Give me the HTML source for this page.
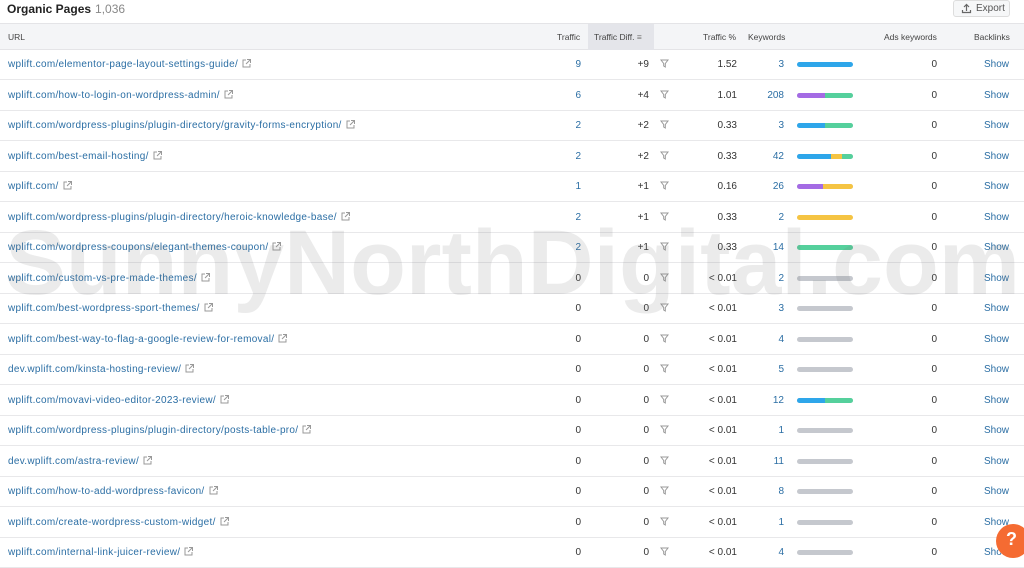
<!DOCTYPE html>
<html><head><meta charset="utf-8"><style>
*{margin:0;padding:0;box-sizing:border-box}
body{width:1024px;height:566px;overflow:hidden;background:#fff;font-family:"Liberation Sans",Arial,sans-serif;font-size:10px;color:#333;position:relative}
.t{position:absolute;left:7px;top:2px;font-size:12px;font-weight:bold;color:#222}
.t span{font-weight:normal;color:#888;margin-left:4px}
.exp{position:absolute;left:953px;top:0;width:57px;height:17px;border:1px solid #ddd;border-radius:3px;background:#f6f7f8;color:#555;font-size:10px;line-height:15px;padding-left:22px}
.exp svg{position:absolute;left:7px;top:2px}
.hd{position:absolute;left:0;top:23px;width:1024px;height:27px;background:#f4f5f7;border-top:1px solid #e4e4e7;border-bottom:1px solid #e4e4e7;font-size:8.5px;color:#444}
.hd div{position:absolute;top:8px}
.hd .sel{position:absolute;left:588px;top:0;width:66px;height:26px;background:#e4e5ea}
.r{position:absolute;left:0;width:1024px;height:31px;border-bottom:1px solid #e8e8ea}
.r div{position:absolute;top:10px}
.u{left:8px;color:#2b6ea4;letter-spacing:.3px}
.u svg{margin-left:4px;vertical-align:-1px}
.tr{right:443px;color:#2b6ea4}
.td{right:375px}
.f{left:660px;top:10px!important;width:9px;height:9px;background:none}
.tp{right:287px}
.kw{right:240px;color:#2b6ea4}
.b{left:797px;top:13px!important;width:56px;height:5px;border-radius:3px;overflow:hidden;display:flex;background:#c5c8ce}
.b i{display:block;height:5px}
.ad{right:87px}
.sh{right:15px;color:#2b6ea4}
.B{background:#2ea6ea}.P{background:#a46be4}.G{background:#55d09c}.Y{background:#f5c443}
.q{position:absolute;left:996px;top:524px;width:34px;height:34px;border-radius:50%;background:#f56b32;color:#fff;font-size:18px;font-weight:bold;padding:5px 0 0 10px}
svg.wm{position:absolute;left:0;top:0}
.f::before{content:"";position:absolute;left:0;top:0;width:9px;height:9px;background:no-repeat}
</style></head><body>
<div class="t">Organic Pages<span>1,036</span></div>
<div class="exp"><svg width="11" height="11" viewBox="0 0 11 11" fill="none" stroke="#666" stroke-width="1.2"><path d="M5.5 8V1.5M3 4l2.5-2.5L8 4M1.5 7v2.5h8V7"/></svg>Export</div>
<div class="hd"><div class="sel"></div>
<div style="left:8px">URL</div><div style="left:557px">Traffic</div><div style="left:594px">Traffic Diff. <span style="color:#777">&#8801;</span></div>
<div style="left:703px">Traffic %</div><div style="left:748px">Keywords</div><div style="left:884px">Ads keywords</div><div style="left:974px">Backlinks</div></div>

<div class="r" style="top:49px"><div class="u">wplift.com/elementor-page-layout-settings-guide/<svg width="9" height="9" viewBox="0 0 9 9" fill="none" stroke="#999"><path d="M4 1H1v7h7V5M5 .5h3.5V4M8.5.5 4 5"/></svg></div><div class="tr">9</div><div class="td">+9</div><div class="f"><svg width="9" height="9" viewBox="0 0 9 9" fill="none" stroke="#999"><path d="M1 1h7L5.3 4.5V8L3.7 7V4.5z"/></svg></div><div class="tp">1.52</div><div class="kw">3</div><div class="b"><i class="B" style="width:100%"></i></div><div class="ad">0</div><div class="sh">Show</div></div>
<div class="r" style="top:80px"><div class="u">wplift.com/how-to-login-on-wordpress-admin/<svg width="9" height="9" viewBox="0 0 9 9" fill="none" stroke="#999"><path d="M4 1H1v7h7V5M5 .5h3.5V4M8.5.5 4 5"/></svg></div><div class="tr">6</div><div class="td">+4</div><div class="f"><svg width="9" height="9" viewBox="0 0 9 9" fill="none" stroke="#999"><path d="M1 1h7L5.3 4.5V8L3.7 7V4.5z"/></svg></div><div class="tp">1.01</div><div class="kw">208</div><div class="b"><i class="P" style="width:50%"></i><i class="G" style="width:50%"></i></div><div class="ad">0</div><div class="sh">Show</div></div>
<div class="r" style="top:110px"><div class="u">wplift.com/wordpress-plugins/plugin-directory/gravity-forms-encryption/<svg width="9" height="9" viewBox="0 0 9 9" fill="none" stroke="#999"><path d="M4 1H1v7h7V5M5 .5h3.5V4M8.5.5 4 5"/></svg></div><div class="tr">2</div><div class="td">+2</div><div class="f"><svg width="9" height="9" viewBox="0 0 9 9" fill="none" stroke="#999"><path d="M1 1h7L5.3 4.5V8L3.7 7V4.5z"/></svg></div><div class="tp">0.33</div><div class="kw">3</div><div class="b"><i class="B" style="width:50%"></i><i class="G" style="width:50%"></i></div><div class="ad">0</div><div class="sh">Show</div></div>
<div class="r" style="top:141px"><div class="u">wplift.com/best-email-hosting/<svg width="9" height="9" viewBox="0 0 9 9" fill="none" stroke="#999"><path d="M4 1H1v7h7V5M5 .5h3.5V4M8.5.5 4 5"/></svg></div><div class="tr">2</div><div class="td">+2</div><div class="f"><svg width="9" height="9" viewBox="0 0 9 9" fill="none" stroke="#999"><path d="M1 1h7L5.3 4.5V8L3.7 7V4.5z"/></svg></div><div class="tp">0.33</div><div class="kw">42</div><div class="b"><i class="B" style="width:60%"></i><i class="Y" style="width:20%"></i><i class="G" style="width:20%"></i></div><div class="ad">0</div><div class="sh">Show</div></div>
<div class="r" style="top:171px"><div class="u">wplift.com/<svg width="9" height="9" viewBox="0 0 9 9" fill="none" stroke="#999"><path d="M4 1H1v7h7V5M5 .5h3.5V4M8.5.5 4 5"/></svg></div><div class="tr">1</div><div class="td">+1</div><div class="f"><svg width="9" height="9" viewBox="0 0 9 9" fill="none" stroke="#999"><path d="M1 1h7L5.3 4.5V8L3.7 7V4.5z"/></svg></div><div class="tp">0.16</div><div class="kw">26</div><div class="b"><i class="P" style="width:46%"></i><i class="Y" style="width:54%"></i></div><div class="ad">0</div><div class="sh">Show</div></div>
<div class="r" style="top:202px"><div class="u">wplift.com/wordpress-plugins/plugin-directory/heroic-knowledge-base/<svg width="9" height="9" viewBox="0 0 9 9" fill="none" stroke="#999"><path d="M4 1H1v7h7V5M5 .5h3.5V4M8.5.5 4 5"/></svg></div><div class="tr">2</div><div class="td">+1</div><div class="f"><svg width="9" height="9" viewBox="0 0 9 9" fill="none" stroke="#999"><path d="M1 1h7L5.3 4.5V8L3.7 7V4.5z"/></svg></div><div class="tp">0.33</div><div class="kw">2</div><div class="b"><i class="Y" style="width:100%"></i></div><div class="ad">0</div><div class="sh">Show</div></div>
<div class="r" style="top:232px"><div class="u">wplift.com/wordpress-coupons/elegant-themes-coupon/<svg width="9" height="9" viewBox="0 0 9 9" fill="none" stroke="#999"><path d="M4 1H1v7h7V5M5 .5h3.5V4M8.5.5 4 5"/></svg></div><div class="tr">2</div><div class="td">+1</div><div class="f"><svg width="9" height="9" viewBox="0 0 9 9" fill="none" stroke="#999"><path d="M1 1h7L5.3 4.5V8L3.7 7V4.5z"/></svg></div><div class="tp">0.33</div><div class="kw">14</div><div class="b"><i class="G" style="width:100%"></i></div><div class="ad">0</div><div class="sh">Show</div></div>
<div class="r" style="top:263px"><div class="u">wplift.com/custom-vs-pre-made-themes/<svg width="9" height="9" viewBox="0 0 9 9" fill="none" stroke="#999"><path d="M4 1H1v7h7V5M5 .5h3.5V4M8.5.5 4 5"/></svg></div><div class="tr" style="color:#333">0</div><div class="td">0</div><div class="f"><svg width="9" height="9" viewBox="0 0 9 9" fill="none" stroke="#999"><path d="M1 1h7L5.3 4.5V8L3.7 7V4.5z"/></svg></div><div class="tp">&lt; 0.01</div><div class="kw">2</div><div class="b"></div><div class="ad">0</div><div class="sh">Show</div></div>
<div class="r" style="top:293px"><div class="u">wplift.com/best-wordpress-sport-themes/<svg width="9" height="9" viewBox="0 0 9 9" fill="none" stroke="#999"><path d="M4 1H1v7h7V5M5 .5h3.5V4M8.5.5 4 5"/></svg></div><div class="tr" style="color:#333">0</div><div class="td">0</div><div class="f"><svg width="9" height="9" viewBox="0 0 9 9" fill="none" stroke="#999"><path d="M1 1h7L5.3 4.5V8L3.7 7V4.5z"/></svg></div><div class="tp">&lt; 0.01</div><div class="kw">3</div><div class="b"></div><div class="ad">0</div><div class="sh">Show</div></div>
<div class="r" style="top:324px"><div class="u">wplift.com/best-way-to-flag-a-google-review-for-removal/<svg width="9" height="9" viewBox="0 0 9 9" fill="none" stroke="#999"><path d="M4 1H1v7h7V5M5 .5h3.5V4M8.5.5 4 5"/></svg></div><div class="tr" style="color:#333">0</div><div class="td">0</div><div class="f"><svg width="9" height="9" viewBox="0 0 9 9" fill="none" stroke="#999"><path d="M1 1h7L5.3 4.5V8L3.7 7V4.5z"/></svg></div><div class="tp">&lt; 0.01</div><div class="kw">4</div><div class="b"></div><div class="ad">0</div><div class="sh">Show</div></div>
<div class="r" style="top:354px"><div class="u">dev.wplift.com/kinsta-hosting-review/<svg width="9" height="9" viewBox="0 0 9 9" fill="none" stroke="#999"><path d="M4 1H1v7h7V5M5 .5h3.5V4M8.5.5 4 5"/></svg></div><div class="tr" style="color:#333">0</div><div class="td">0</div><div class="f"><svg width="9" height="9" viewBox="0 0 9 9" fill="none" stroke="#999"><path d="M1 1h7L5.3 4.5V8L3.7 7V4.5z"/></svg></div><div class="tp">&lt; 0.01</div><div class="kw">5</div><div class="b"></div><div class="ad">0</div><div class="sh">Show</div></div>
<div class="r" style="top:385px"><div class="u">wplift.com/movavi-video-editor-2023-review/<svg width="9" height="9" viewBox="0 0 9 9" fill="none" stroke="#999"><path d="M4 1H1v7h7V5M5 .5h3.5V4M8.5.5 4 5"/></svg></div><div class="tr" style="color:#333">0</div><div class="td">0</div><div class="f"><svg width="9" height="9" viewBox="0 0 9 9" fill="none" stroke="#999"><path d="M1 1h7L5.3 4.5V8L3.7 7V4.5z"/></svg></div><div class="tp">&lt; 0.01</div><div class="kw">12</div><div class="b"><i class="B" style="width:50%"></i><i class="G" style="width:50%"></i></div><div class="ad">0</div><div class="sh">Show</div></div>
<div class="r" style="top:415px"><div class="u">wplift.com/wordpress-plugins/plugin-directory/posts-table-pro/<svg width="9" height="9" viewBox="0 0 9 9" fill="none" stroke="#999"><path d="M4 1H1v7h7V5M5 .5h3.5V4M8.5.5 4 5"/></svg></div><div class="tr" style="color:#333">0</div><div class="td">0</div><div class="f"><svg width="9" height="9" viewBox="0 0 9 9" fill="none" stroke="#999"><path d="M1 1h7L5.3 4.5V8L3.7 7V4.5z"/></svg></div><div class="tp">&lt; 0.01</div><div class="kw">1</div><div class="b"></div><div class="ad">0</div><div class="sh">Show</div></div>
<div class="r" style="top:446px"><div class="u">dev.wplift.com/astra-review/<svg width="9" height="9" viewBox="0 0 9 9" fill="none" stroke="#999"><path d="M4 1H1v7h7V5M5 .5h3.5V4M8.5.5 4 5"/></svg></div><div class="tr" style="color:#333">0</div><div class="td">0</div><div class="f"><svg width="9" height="9" viewBox="0 0 9 9" fill="none" stroke="#999"><path d="M1 1h7L5.3 4.5V8L3.7 7V4.5z"/></svg></div><div class="tp">&lt; 0.01</div><div class="kw">11</div><div class="b"></div><div class="ad">0</div><div class="sh">Show</div></div>
<div class="r" style="top:476px"><div class="u">wplift.com/how-to-add-wordpress-favicon/<svg width="9" height="9" viewBox="0 0 9 9" fill="none" stroke="#999"><path d="M4 1H1v7h7V5M5 .5h3.5V4M8.5.5 4 5"/></svg></div><div class="tr" style="color:#333">0</div><div class="td">0</div><div class="f"><svg width="9" height="9" viewBox="0 0 9 9" fill="none" stroke="#999"><path d="M1 1h7L5.3 4.5V8L3.7 7V4.5z"/></svg></div><div class="tp">&lt; 0.01</div><div class="kw">8</div><div class="b"></div><div class="ad">0</div><div class="sh">Show</div></div>
<div class="r" style="top:507px"><div class="u">wplift.com/create-wordpress-custom-widget/<svg width="9" height="9" viewBox="0 0 9 9" fill="none" stroke="#999"><path d="M4 1H1v7h7V5M5 .5h3.5V4M8.5.5 4 5"/></svg></div><div class="tr" style="color:#333">0</div><div class="td">0</div><div class="f"><svg width="9" height="9" viewBox="0 0 9 9" fill="none" stroke="#999"><path d="M1 1h7L5.3 4.5V8L3.7 7V4.5z"/></svg></div><div class="tp">&lt; 0.01</div><div class="kw">1</div><div class="b"></div><div class="ad">0</div><div class="sh">Show</div></div>
<div class="r" style="top:537px"><div class="u">wplift.com/internal-link-juicer-review/<svg width="9" height="9" viewBox="0 0 9 9" fill="none" stroke="#999"><path d="M4 1H1v7h7V5M5 .5h3.5V4M8.5.5 4 5"/></svg></div><div class="tr" style="color:#333">0</div><div class="td">0</div><div class="f"><svg width="9" height="9" viewBox="0 0 9 9" fill="none" stroke="#999"><path d="M1 1h7L5.3 4.5V8L3.7 7V4.5z"/></svg></div><div class="tp">&lt; 0.01</div><div class="kw">4</div><div class="b"></div><div class="ad">0</div><div class="sh">Show</div></div>

<svg class="wm" width="1024" height="566"><text x="5" y="294" textLength="1015" lengthAdjust="spacingAndGlyphs" font-family="Liberation Sans, sans-serif" font-weight="bold" font-size="92" fill="rgba(120,120,120,0.15)">SunnyNorthDigital.com</text></svg>
<div class="q">?</div>
</body></html>
